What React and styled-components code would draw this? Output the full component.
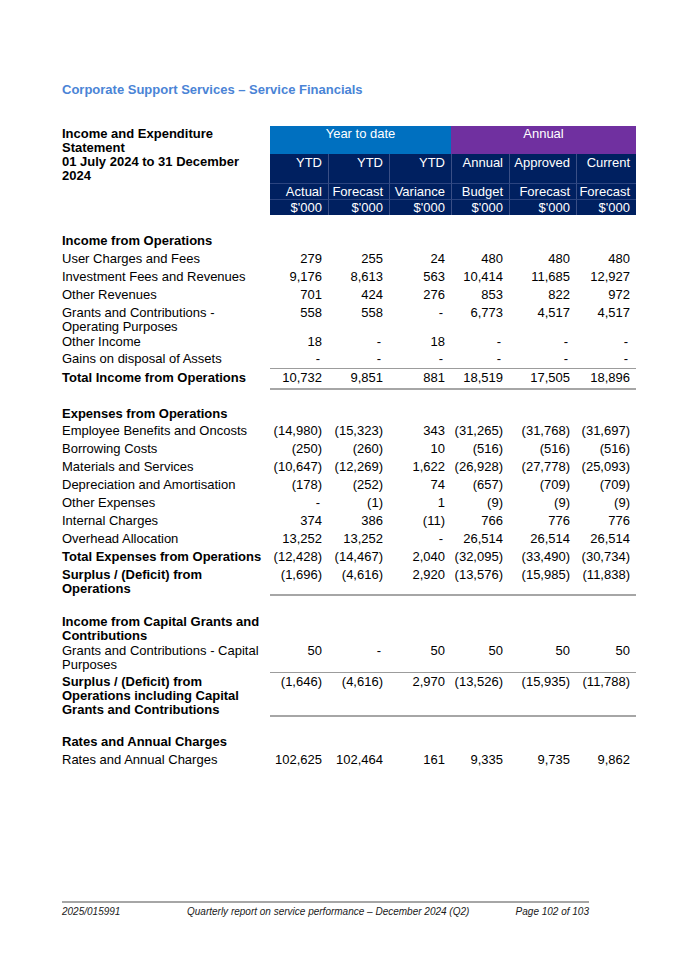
import React from "react";
import styled, { createGlobalStyle, css } from "styled-components";

const COLS = "208px 58px 61px 62px 58px 67px 60px";

const Global = createGlobalStyle`
  html, body { margin: 0; padding: 0; background: #fff; }
  body { font-family: "Liberation Sans", Arial, sans-serif; color: #000; }
`;

const Page = styled.div`
  box-sizing: border-box;
  min-height: 954px;
  width: 675px;
  padding: 82px 39px 36px 62px;
  display: flex;
  flex-direction: column;
  font-size: 13px;
`;

const Title = styled.h1`
  margin: 0 0 29px;
  font-size: 13px;
  line-height: 15px;
  font-weight: bold;
  color: #4a84d6;
`;

const Header = styled.div`
  display: grid;
  grid-template-columns: ${COLS};
  grid-template-rows: 28px 29px 16px 16px;
`;

const HeadLabel = styled.div`
  grid-column: 1;
  grid-row: 1 / span 4;
  font-weight: bold;
  line-height: 14px;
  padding-top: 1px;
  padding-right: 6px;
`;

const Band = styled.div`
  grid-row: 1;
  grid-column: ${(p) => p.$span};
  background: ${(p) => p.$bg};
  color: #fff;
  text-align: center;
  line-height: 14px;
  padding-top: 1px;
`;

const HeadCell = styled.div`
  grid-row: ${(p) => p.$row};
  background: #002060;
  color: #fff;
  text-align: right;
  padding-right: 6px;
  line-height: ${(p) => (p.$row === 2 ? "14px" : "16px")};
  padding-top: ${(p) => (p.$row === 2 ? "2px" : "0")};
  border-left: ${(p) => (p.$first ? "none" : "1px solid #3a4f86")};
  border-top: ${(p) => (p.$row > 2 ? "1px solid #2b4480" : "none")};
  box-sizing: border-box;
  white-space: nowrap;
`;

const Spacer = styled.div`
  height: ${(p) => p.$h || 14}px;
`;

const Row = styled.div`
  display: grid;
  grid-template-columns: ${COLS};
  line-height: 14px;
`;

const Label = styled.div`
  padding-top: ${(p) => p.$pt}px;
  padding-right: 6px;
  font-weight: ${(p) => (p.$bold ? "bold" : "normal")};
`;

const Num = styled.div`
  text-align: right;
  white-space: nowrap;
  padding-top: ${(p) => p.$pt}px;
  padding-right: ${(p) => (p.$dash ? 8 : 6)}px;
  padding-bottom: ${(p) => p.$pb || 0}px;
  ${(p) =>
    p.$top &&
    css`
      border-top: 1px solid #9c9c9c;
    `}
  ${(p) =>
    p.$bottom &&
    css`
      border-bottom: ${p.$bottom}px solid #a6a6a6;
    `}
`;

const Footer = styled.div`
  margin-top: auto;
  width: 527px;
  border-top: 2px solid #a6a6a6;
  padding-top: 3px;
  display: grid;
  grid-template-columns: 125px 1fr auto;
  font-size: 10px;
  line-height: 12px;
  font-style: italic;
  color: #1a1a1a;
`;

const FooterText = styled.span`
  white-space: nowrap;
`;

function DataRow({ label, values, bold, pt = 4, top, bottom, pb }) {
  return (
    <Row>
      <Label $bold={bold} $pt={pt + (top ? 1 : 0)}>
        {label}
      </Label>
      {(values || []).map((v, i) => (
        <Num
          key={i}
          $pt={pt}
          $dash={v === "-"}
          $top={top}
          $bottom={bottom}
          $pb={pb}
        >
          {v}
        </Num>
      ))}
    </Row>
  );
}

const H = ({ label, pt }) => <DataRow label={label} bold pt={pt} />;

export default function App() {
  return (
    <>
      <Global />
      <Page>
        <Title>Corporate Support Services – Service Financials</Title>
        <Header>
          <HeadLabel>
            Income and Expenditure Statement
            <br />
            01 July 2024 to 31 December 2024
          </HeadLabel>
          <Band $span="2 / span 3" $bg="#0070c0">Year to date</Band>
          <Band $span="5 / span 3" $bg="#7030a0">Annual</Band>
          {["YTD", "YTD", "YTD", "Annual", "Approved", "Current"].map((t, i) => (
            <HeadCell key={"a" + i} $row={2} $first={i === 0}>{t}</HeadCell>
          ))}
          {["Actual", "Forecast", "Variance", "Budget", "Forecast", "Forecast"].map((t, i) => (
            <HeadCell key={"b" + i} $row={3} $first={i === 0}>{t}</HeadCell>
          ))}
          {["$'000", "$'000", "$'000", "$'000", "$'000", "$'000"].map((t, i) => (
            <HeadCell key={"c" + i} $row={4} $first={i === 0}>{t}</HeadCell>
          ))}
        </Header>

        <Spacer $h={15.5} />
        <H label="Income from Operations" pt={3.5} />
        <DataRow label="User Charges and Fees" values={["279", "255", "24", "480", "480", "480"]} />
        <DataRow label="Investment Fees and Revenues" values={["9,176", "8,613", "563", "10,414", "11,685", "12,927"]} />
        <DataRow label="Other Revenues" values={["701", "424", "276", "853", "822", "972"]} />
        <DataRow label="Grants and Contributions - Operating Purposes" values={["558", "558", "-", "6,773", "4,517", "4,517"]} />
        <DataRow label="Other Income" pt={1} values={["18", "-", "18", "-", "-", "-"]} />
        <DataRow label="Gains on disposal of Assets" pt={3} pb={2} values={["-", "-", "-", "-", "-", "-"]} />
        <DataRow label="Total Income from Operations" bold top bottom={2} pt={2} pb={3} values={["10,732", "9,851", "881", "18,519", "17,505", "18,896"]} />

        <Spacer />
        <H label="Expenses from Operations" pt={3} />
        <DataRow label="Employee Benefits and Oncosts" pt={3} values={["(14,980)", "(15,323)", "343", "(31,265)", "(31,768)", "(31,697)"]} />
        <DataRow label="Borrowing Costs" values={["(250)", "(260)", "10", "(516)", "(516)", "(516)"]} />
        <DataRow label="Materials and Services" values={["(10,647)", "(12,269)", "1,622", "(26,928)", "(27,778)", "(25,093)"]} />
        <DataRow label="Depreciation and Amortisation" values={["(178)", "(252)", "74", "(657)", "(709)", "(709)"]} />
        <DataRow label="Other Expenses" values={["-", "(1)", "1", "(9)", "(9)", "(9)"]} />
        <DataRow label="Internal Charges" values={["374", "386", "(11)", "766", "776", "776"]} />
        <DataRow label="Overhead Allocation" values={["13,252", "13,252", "-", "26,514", "26,514", "26,514"]} />
        <DataRow label="Total Expenses from Operations" bold values={["(12,428)", "(14,467)", "2,040", "(32,095)", "(33,490)", "(30,734)"]} />
        <DataRow label="Surplus / (Deficit) from Operations" bold bottom={2} pb={1} values={["(1,696)", "(4,616)", "2,920", "(13,576)", "(15,985)", "(11,838)"]} />

        <Spacer />
        <H label="Income from Capital Grants and Contributions" pt={5} />
        <DataRow label="Grants and Contributions - Capital Purposes" pt={1} values={["50", "-", "50", "50", "50", "50"]} />
        <DataRow label="Surplus / (Deficit) from Operations including Capital Grants and Contributions" bold pt={2} top bottom={2} values={["(1,646)", "(4,616)", "2,970", "(13,526)", "(15,935)", "(11,788)"]} />

        <Spacer />
        <H label="Rates and Annual Charges" pt={4} />
        <DataRow label="Rates and Annual Charges" values={["102,625", "102,464", "161", "9,335", "9,735", "9,862"]} />

        <Footer>
          <FooterText>2025/015991</FooterText>
          <FooterText>Quarterly report on service performance – December 2024 (Q2)</FooterText>
          <FooterText>Page 102 of 103</FooterText>
        </Footer>
      </Page>
    </>
  );
}
